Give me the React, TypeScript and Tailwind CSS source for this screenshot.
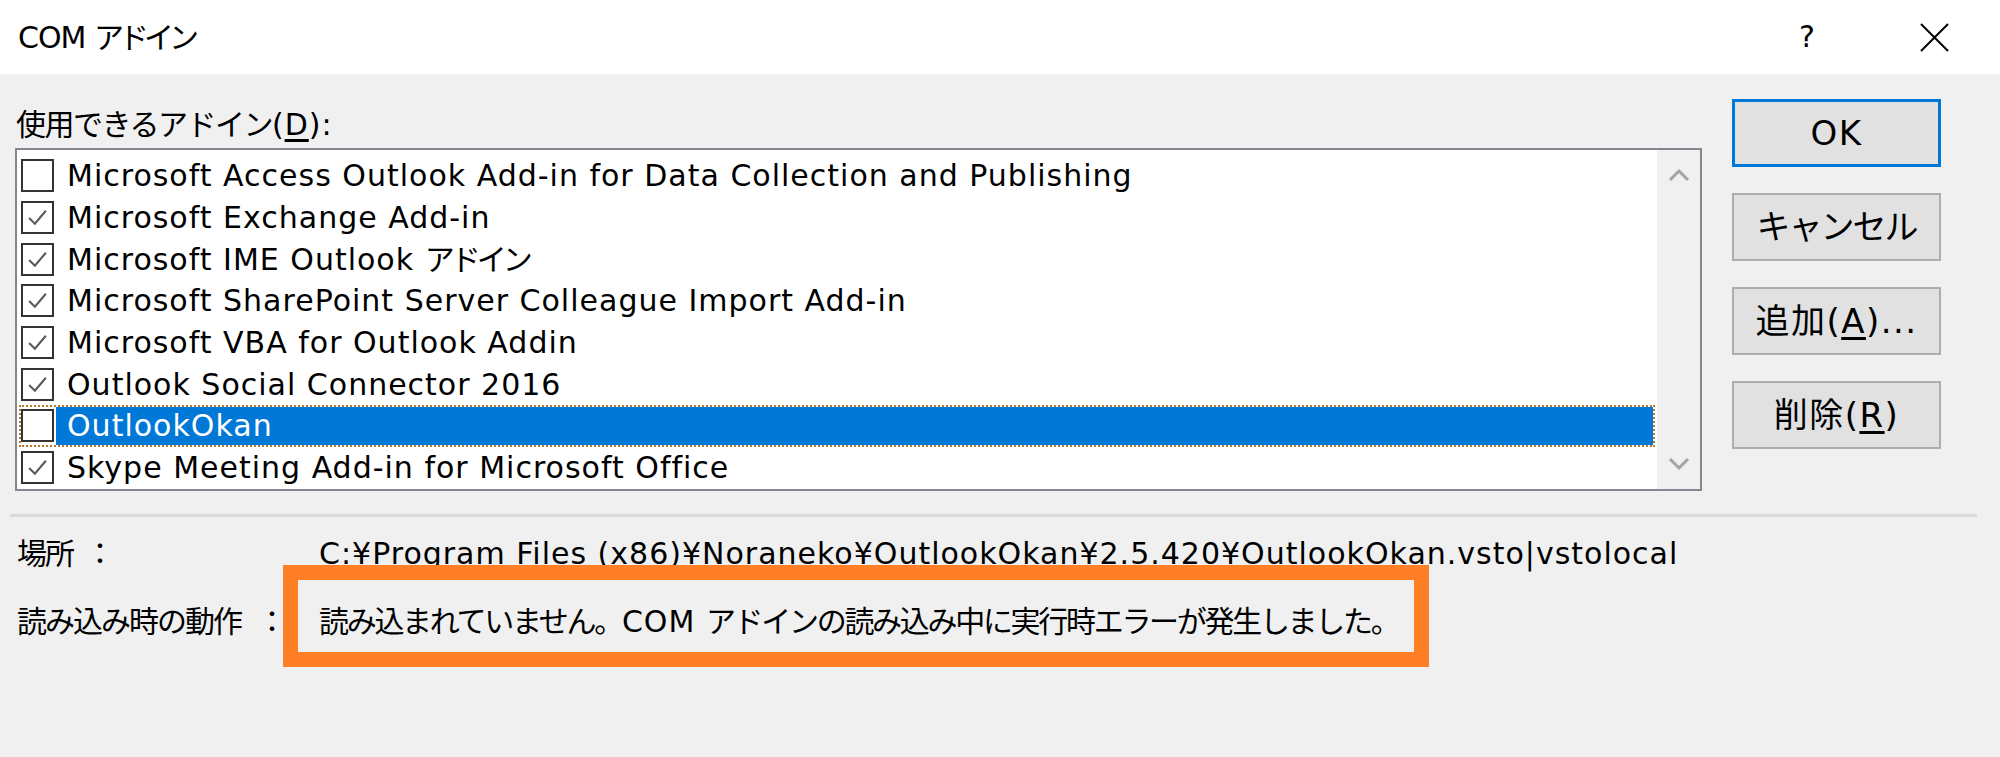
import React from "react";

type Item = { name: React.ReactNode; key: string; checked: boolean; selected?: boolean };

// Japanese runs: Meiryo UI kana are narrower than Noto's, so pull them together
function J({ children, t = "tracking-[-2px]" }: { children: React.ReactNode; t?: string }) {
  return <span className={t}>{children}</span>;
}

const items: Item[] = [
  { key: "access", name: "Microsoft Access Outlook Add-in for Data Collection and Publishing", checked: false },
  { key: "exchange", name: "Microsoft Exchange Add-in", checked: true },
  {
    key: "ime",
    name: (
      <>
        Microsoft IME Outlook{" "}
        <J t="tracking-[-4px]">アドイン</J>
      </>
    ),
    checked: true,
  },
  { key: "sharepoint", name: "Microsoft SharePoint Server Colleague Import Add-in", checked: true },
  { key: "vba", name: "Microsoft VBA for Outlook Addin", checked: true },
  { key: "social", name: "Outlook Social Connector 2016", checked: true },
  { key: "okan", name: "OutlookOkan", checked: false, selected: true },
  { key: "skype", name: "Skype Meeting Add-in for Microsoft Office", checked: true },
];

function CheckBox({ checked }: { checked: boolean }) {
  return (
    <div className="w-[33px] h-[33px] border-2 border-[#333333] bg-white flex items-center justify-center shrink-0">
      {checked && (
        <svg width="23" height="23" viewBox="0 0 22 22">
          <path d="M3 11.5 L8.5 17 L19 4.5" fill="none" stroke="#5a5a5a" strokeWidth="2" />
        </svg>
      )}
    </div>
  );
}

function Button({ children, primary }: { children: React.ReactNode; primary?: boolean }) {
  return (
    <div
      className={`h-[68px] w-[209px] bg-[#e1e1e1] flex items-center justify-center text-[34px] tracking-[1.5px] text-black ${
        primary ? "border-[3px] border-[#0078d7]" : "border-2 border-[#adadad]"
      }`}
    >
      <span>{children}</span>
    </div>
  );
}

export default function App() {
  return (
    <div
      className="w-[2000px] h-[757px] bg-[#f0f0f0] text-black overflow-hidden text-[30px] tracking-[1px]"
      style={{ fontFamily: '"DejaVu Sans", "Noto Sans CJK JP", sans-serif' }}
    >
      {/* title bar */}
      <div className="h-[74px] bg-white flex items-center pl-[18px] pr-[51px]">
        <span className="tracking-[-1px]">
          COM <J t="tracking-[-5px]">アドイン</J>
        </span>
        <div className="ml-auto flex items-center gap-[104px]">
          <span className="text-[30px] leading-none">?</span>
          <svg width="29" height="29" viewBox="0 0 29 29">
            <path d="M1 1 L28 28 M28 1 L1 28" stroke="#000" strokeWidth="2" />
          </svg>
        </div>
      </div>

      {/* main area */}
      <div className="flex pl-[15px]">
        <div className="w-[1687px] pt-[30px]">
          <div className="h-[40px] flex items-center pl-[1px]">
            <span>
              <J t="tracking-[-1.5px]">使用できるアドイン</J>(<span className="underline underline-offset-4">D</span>):
            </span>
          </div>
          <div className="mt-[4px] h-[343px] border-2 border-[#828790] bg-white flex">
            <div className="flex-1 pt-[5px]">
              {items.map((it) => (
                <div
                  key={it.key}
                  className={`h-[41.7px] flex items-center ${
                    it.selected ? "border-2 border-dotted border-[#b9762c] mr-[2px] ml-[2px]" : "ml-[4px]"
                  }`}
                >
                  <CheckBox checked={it.checked} />
                  <div
                    className={`h-full flex-1 flex items-center ml-[2px] pl-[11px] whitespace-nowrap ${
                      it.selected ? "bg-[#0078d7] text-white" : ""
                    }`}
                  >
                    <span>{it.name}</span>
                  </div>
                </div>
              ))}
            </div>
            <div className="w-[43px] bg-[#f0f0f0] flex flex-col items-center justify-between py-[18px]">
              <svg width="22" height="14" viewBox="0 0 22 14">
                <path d="M2 12 L11 3 L20 12" fill="none" stroke="#a3a3a3" strokeWidth="3" />
              </svg>
              <svg width="22" height="14" viewBox="0 0 22 14">
                <path d="M2 2 L11 11 L20 2" fill="none" stroke="#a3a3a3" strokeWidth="3" />
              </svg>
            </div>
          </div>
        </div>
        <div className="ml-[30px] pt-[25px] flex flex-col gap-[26px]">
          <Button primary>OK</Button>
          <Button>
            <J t="tracking-[-2px]">キャンセル</J>
          </Button>
          <Button>
            追加(<span className="underline underline-offset-4">A</span>)...
          </Button>
          <Button>
            削除(<span className="underline underline-offset-4">R</span>)
          </Button>
        </div>
      </div>

      {/* separator */}
      <div className="mt-[23px] ml-[10px] mr-[23px] h-[3px] bg-[#dadada]" />

      {/* details */}
      <div className="pl-[17px] pt-[16px]">
        <div className="h-[40px] flex items-center">
          <span className="w-[302px]">
            <J>場所</J>
            <span className="ml-[12px]">：</span>
          </span>
          <span className="whitespace-nowrap">
            C:¥Program Files (x86)¥Noraneko¥OutlookOkan¥2.5.420¥OutlookOkan.vsto|vstolocal
          </span>
        </div>
        <div className="h-[40px] mt-[28px] flex items-center">
          <span className="w-[302px] whitespace-nowrap">
            <J>読み込み時の動作</J>
            <span className="ml-[16px]">：</span>
          </span>
          <div className="relative">
            <span className="whitespace-nowrap">
              <J t="tracking-[-2.3px]">読み込まれていません。</J>COM{" "}
              <J t="tracking-[-2.3px]">アドインの読み込み中に実行時エラーが発生しました。</J>
            </span>
            <div className="absolute left-[-36px] top-[-34px] w-[1146px] h-[102px] border-[15px] border-[#ff7f27]" />
          </div>
        </div>
      </div>
    </div>
  );
}
